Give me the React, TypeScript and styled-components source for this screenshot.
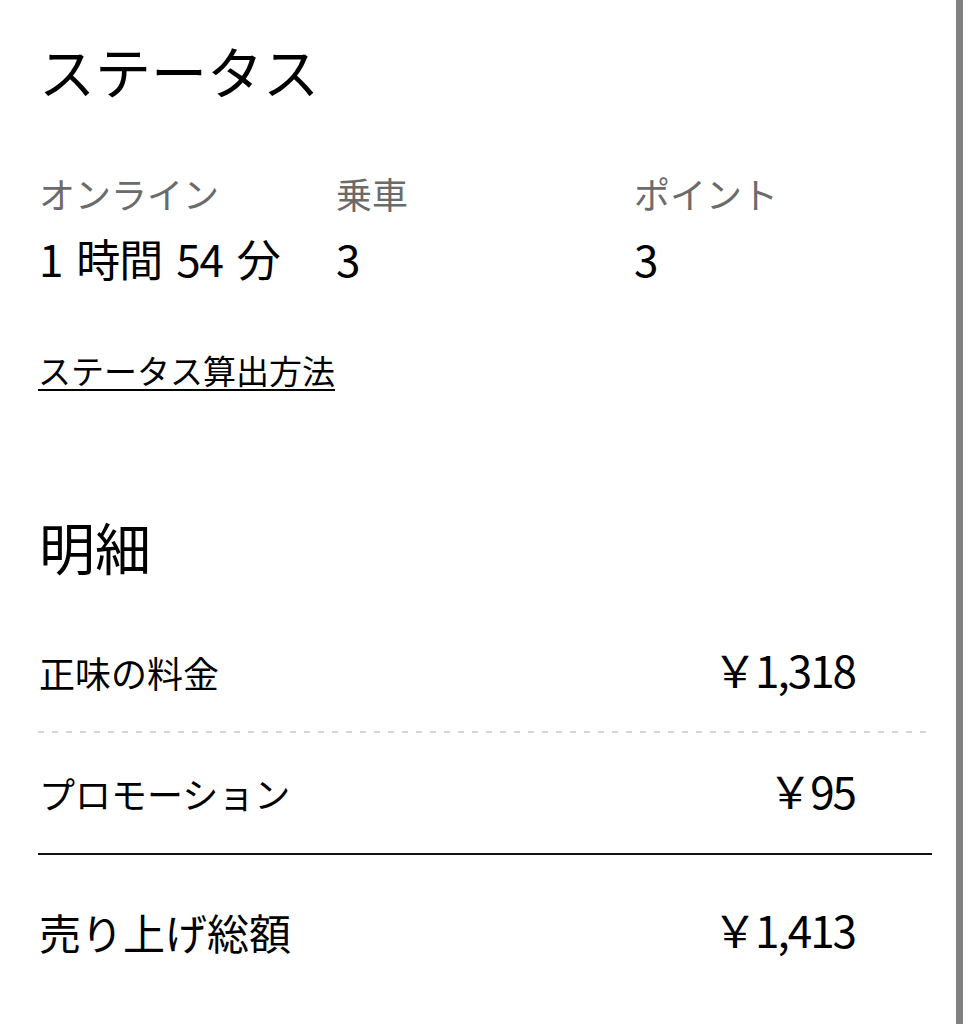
import styled, { createGlobalStyle } from 'styled-components';

const GlobalStyle = createGlobalStyle`
  html, body {
    margin: 0;
    padding: 0;
    background: #ffffff;
  }
  body {
    font-family: "Noto Sans CJK JP", "Noto Sans", sans-serif;
    color: #000000;
  }
`;

const Screen = styled.div`
  display: flex;
  width: 971px;
  height: 1024px;
  overflow: hidden;
  background: #ffffff;
`;

const Content = styled.main`
  width: 894px;
  padding-left: 38px;
  flex-shrink: 0;
`;

const Gutter = styled.div`
  flex: 1;
`;

const ScrollBar = styled.div`
  width: 7px;
  margin-right: 8px;
  background: #808080;
`;

const Heading = styled.h1<{ $top: number }>`
  margin: ${p => p.$top}px 0 0 1px;
  font-size: 56px;
  font-weight: 400;
  line-height: 80px;
`;

const Stats = styled.div`
  display: grid;
  grid-template-columns: 297px 298px 1fr;
  margin: 58px 0 0 1px;
`;

const Stat = styled.div`
  display: flex;
  flex-direction: column;
  gap: 10px;
`;

const StatLabel = styled.span`
  font-size: 36px;
  line-height: 50px;
  color: #6b6b6b;
`;

const StatValue = styled.span`
  font-size: 44px;
  line-height: 60px;
  color: #000000;
  word-spacing: 5px;
  letter-spacing: -1px;
`;

const HelpLink = styled.a`
  display: inline-block;
  margin-top: 57px;
  font-size: 33px;
  line-height: 50px;
  color: #000000;
  text-decoration: underline;
  text-decoration-thickness: 2px;
  text-underline-offset: 5px;
`;

const Rows = styled.div`
  margin-top: 26px;
`;

const Row = styled.div<{ $top: number; $bottom: number }>`
  display: flex;
  align-items: center;
  justify-content: space-between;
  padding: ${p => p.$top}px 77px ${p => p.$bottom}px 1px;
`;

const RowLabel = styled.span<{ $big?: boolean }>`
  font-size: ${p => (p.$big ? 42 : 36)}px;
  line-height: 50px;
`;

const Amount = styled.span`
  font-size: 44px;
  font-weight: 400;
  line-height: 50px;
  letter-spacing: -2px;
  margin-top: -6px;
`;

const Divider = styled.div<{ $solid?: boolean }>`
  height: 2px;
  background: ${p =>
    p.$solid
      ? '#111111'
      : 'repeating-linear-gradient(90deg, #d6d6d6 0 6px, transparent 6px 14px)'};
`;

const stats = [
  { label: 'オンライン', value: '1 時間 54 分' },
  { label: '乗車', value: '3' },
  { label: 'ポイント', value: '3' },
];

export default function App() {
  return (
    <>
      <GlobalStyle />
      <Screen>
        <Content>
          <Heading $top={30}>ステータス</Heading>
          <Stats>
            {stats.map(s => (
              <Stat key={s.label}>
                <StatLabel>{s.label}</StatLabel>
                <StatValue>{s.value}</StatValue>
              </Stat>
            ))}
          </Stats>
          <HelpLink href="#">ステータス算出方法</HelpLink>
          <Heading $top={111}>明細</Heading>
          <Rows>
            <Row $top={35} $bottom={34}>
              <RowLabel>正味の料金</RowLabel>
              <Amount>￥1,318</Amount>
            </Row>
            <Divider />
            <Row $top={35} $bottom={35}>
              <RowLabel>プロモーション</RowLabel>
              <Amount>￥95</Amount>
            </Row>
            <Divider $solid />
            <Row $top={52} $bottom={0}>
              <RowLabel $big>売り上げ総額</RowLabel>
              <Amount>￥1,413</Amount>
            </Row>
          </Rows>
        </Content>
        <Gutter />
        <ScrollBar />
      </Screen>
    </>
  );
}
